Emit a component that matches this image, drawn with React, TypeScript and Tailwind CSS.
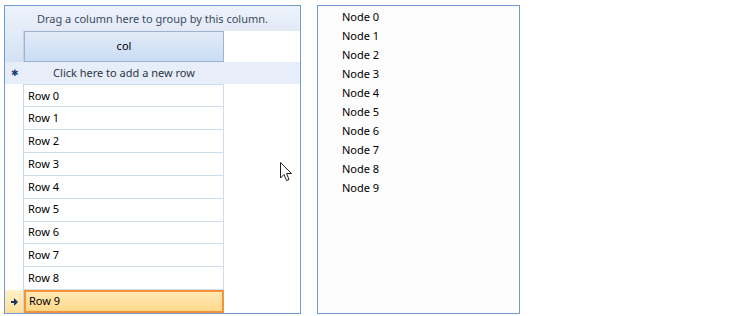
import React from 'react';

const rows = Array.from({ length: 10 }, (_, i) => `Row ${i}`);
const nodes = Array.from({ length: 10 }, (_, i) => `Node ${i}`);

function Cursor() {
  return (
    <svg width="14" height="22" viewBox="0 0 14 22" className="absolute left-[280px] top-[162px]">
      <path d="M0.5 0.5 L0.5 16 L4 12.5 L6.5 18.5 L9 17.5 L6.5 11.5 L11.5 11.5 Z" fill="white" stroke="#222" strokeWidth="1" />
    </svg>
  );
}

export default function App() {
  return (
    <div className="relative w-[735px] h-[316px] bg-white text-[11px] text-black" style={{ fontFamily: '"Noto Sans", "Open Sans", sans-serif' }}>
      <div className="flex pt-[5px] pl-[4px] gap-[16px]">
        <div className="w-[297px] h-[309px] border border-[#6f9ad6] bg-white flex flex-col">
          <div className="h-[25px] pt-[2px] flex items-center justify-center text-[#3b4a63] bg-gradient-to-b from-[#eef3fb] to-[#e2eaf6]">
            Drag a column here to group by this column.
          </div>
          <div className="flex h-[31px]">
            <div className="w-[19px] border-r border-[#c2d3ea] bg-gradient-to-b from-[#e4edf9] to-[#d3e1f3]" />
            <div className="w-[200px] flex items-center justify-center border border-[#9fb3cf] bg-gradient-to-b from-[#e2ebf7] to-[#cadcf5]">
              col
            </div>
          </div>
          <div className="flex h-[23px] bg-[#e7eef9]">
            <div className="w-[19px] flex items-center justify-center text-[#1c3d7a] text-[9px]">✱</div>
            <div className="w-[200px] flex items-center justify-center text-[#2a3547]">Click here to add a new row</div>
          </div>
          {rows.map((r, i) => {
            const sel = i === 9;
            return (
              <div key={r} className="flex h-[23px]">
                <div className={`w-[19px] border-r border-[#c6d6ec] flex items-center justify-center ${sel ? 'bg-gradient-to-b from-[#fff1c9] to-[#ffdf96]' : ''}`}>
                  {sel && (
                    <svg width="7" height="8" viewBox="0 0 7 8">
                      <path d="M0 3 H3 V0 L7 4 L3 8 V5 H0 Z" fill="#1b3260" />
                    </svg>
                  )}
                </div>
                <div
                  className={`w-[200px] flex items-center ${
                    sel
                      ? 'pl-[3px] border-2 border-[#f79238] bg-gradient-to-b from-[#ffe9b4] to-[#ffd88a]'
                      : i === 0
                        ? 'pl-[4px] border-t border-b border-r border-[#cfdcee]'
                        : 'pl-[4px] border-b border-r border-[#cfdcee]'
                  }`}
                >
                  {r}
                </div>
              </div>
            );
          })}
        </div>
        <div className="w-[203px] h-[309px] border border-[#6f9ad6] bg-[#fdfdfd] pt-[2px]">
          {nodes.map((n) => (
            <div key={n} className="h-[19px] flex items-center pl-[24px]">
              {n}
            </div>
          ))}
        </div>
      </div>
      <Cursor />
    </div>
  );
}
